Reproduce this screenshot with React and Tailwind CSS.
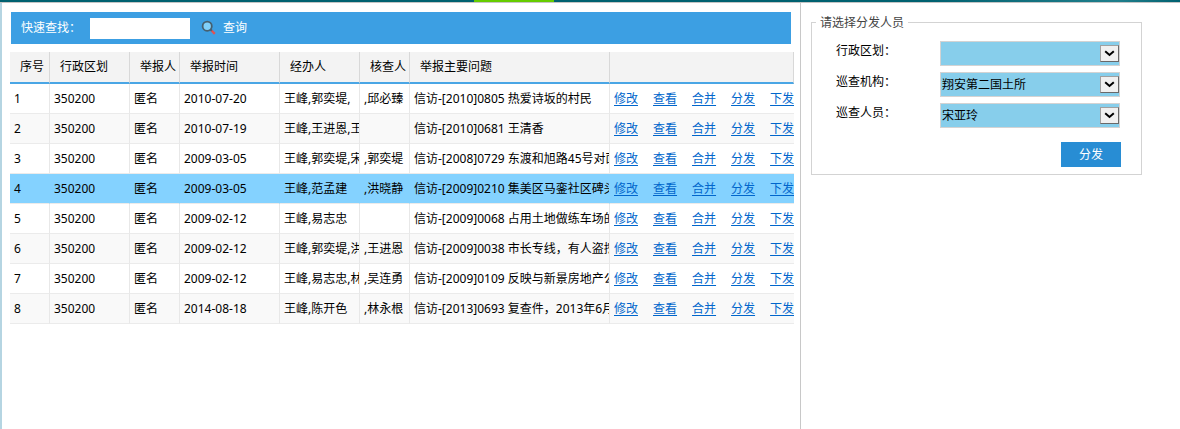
import { useState } from 'react';

const columns = [
  { title: '序号', width: 'w-10' },
  { title: '行政区划', width: 'w-20' },
  { title: '举报人', width: 'w-[50px]' },
  { title: '举报时间', width: 'w-[100px]' },
  { title: '经办人', width: 'w-20' },
  { title: '核查人', width: 'w-[50px]' },
  { title: '举报主要问题', width: 'w-[200px]' },
];

const reports = [
  { id: 1, region: '350200', reporter: '匿名', date: '2010-07-20', handlers: '王峰,郭奕堤,', checker: ',邱必臻', issue: '信访-[2010]0805 热爱诗坂的村民' },
  { id: 2, region: '350200', reporter: '匿名', date: '2010-07-19', handlers: '王峰,王进恩,王', checker: '', issue: '信访-[2010]0681 王清香' },
  { id: 3, region: '350200', reporter: '匿名', date: '2009-03-05', handlers: '王峰,郭奕堤,宋', checker: ',郭奕堤', issue: '信访-[2008]0729 东渡和旭路45号对面' },
  { id: 4, region: '350200', reporter: '匿名', date: '2009-03-05', handlers: '王峰,范孟建', checker: ',洪晓静', issue: '信访-[2009]0210 集美区马銮社区碑头' },
  { id: 5, region: '350200', reporter: '匿名', date: '2009-02-12', handlers: '王峰,易志忠', checker: '', issue: '信访-[2009]0068 占用土地做练车场的' },
  { id: 6, region: '350200', reporter: '匿名', date: '2009-02-12', handlers: '王峰,郭奕堤,洪', checker: ',王进恩', issue: '信访-[2009]0038 市长专线，有人盗挖' },
  { id: 7, region: '350200', reporter: '匿名', date: '2009-02-12', handlers: '王峰,易志忠,林', checker: ',吴连勇', issue: '信访-[2009]0109 反映与新景房地产公' },
  { id: 8, region: '350200', reporter: '匿名', date: '2014-08-18', handlers: '王峰,陈开色', checker: ',林永根', issue: '信访-[2013]0693 复查件，2013年6月' },
];

const actions = ['修改', '查看', '合并', '分发', '下发'];

const fields = [
  { id: 'region', label: '行政区划：', options: [''] },
  { id: 'agency', label: '巡查机构：', options: ['翔安第二国土所'] },
  { id: 'inspector', label: '巡查人员：', options: ['宋亚玲'] },
];

function SearchIcon() {
  return (
    <svg className="w-4 h-4" viewBox="0 0 16 16" fill="none" aria-hidden="true">
      <path d="M10.5 10.5l3.3 3.3" stroke="#e05252" strokeWidth="2.4" />
      <path d="M9 9l1.8 1.8" stroke="#4a6070" strokeWidth="2" />
      <circle cx="6.2" cy="6.2" r="4.6" fill="#7fd0fa" stroke="#46606f" strokeWidth="1.8" />
    </svg>
  );
}

function SelectField({ id, label, options }) {
  return (
    <div className="flex items-start">
      <label htmlFor={id} className="w-[104px] leading-5">{label}</label>
      <div className="relative w-[180px]">
        <select
          id={id}
          className="block w-full h-[25px] appearance-none border border-[#d3d3d3] bg-[#87ceeb] pl-px pr-5 text-black outline-none"
        >
          {options.map((o) => (
            <option key={o}>{o}</option>
          ))}
        </select>
        <span className="pointer-events-none absolute right-px top-1 flex h-[17px] w-[19px] items-center justify-center border border-[#a0a0a0] border-r-[#696969] border-b-[#696969] bg-[#f0f0f0]">
          <svg className="w-[11px] h-[7px]" viewBox="0 0 11 7" fill="none" aria-hidden="true">
            <path d="M1.2 1.2L5.5 5L9.8 1.2" stroke="#000" strokeWidth="2" />
          </svg>
        </span>
      </div>
    </div>
  );
}

export default function App() {
  const [selected, setSelected] = useState(4);

  return (
    <div className="flex min-h-screen flex-col bg-white font-['Noto_Sans','Noto_Sans_CJK_SC',sans-serif] text-xs text-black">
      <div className="flex h-[3px] border-b border-[#c4c4c4]">
        <div className="w-[474px] bg-[#006170]" />
        <div className="w-20 bg-[#66cc00]" />
        <div className="flex-1 bg-linear-to-r from-[#006170] from-60% via-[#1f7f8c] via-90% to-[#006170]" />
      </div>

      <div className="flex flex-1">
        <main className="min-w-0 flex-1 border-l-2 border-l-[#b5d5e2] border-r border-r-[#c8c8c8] pt-[9px] pr-[6px] pl-2">
          <form className="ml-px mr-[3px] flex h-8 items-center bg-[#3c9fe3] pl-[10px] text-white" onSubmit={(e) => e.preventDefault()}>
            <label htmlFor="keyword" className="w-[69px]">快速查找：</label>
            <input id="keyword" type="text" className="h-[21px] w-[100px] bg-white px-1 text-black outline-none" />
            <button type="submit" className="ml-[11px] flex items-center gap-[6px]">
              <SearchIcon />
              查询
            </button>
          </form>

          <table className="mt-2 w-full table-fixed border-separate border-spacing-0 whitespace-nowrap text-left">
            <thead>
              <tr className="h-8 bg-[#f3f3f3]">
                {columns.map((col) => (
                  <th key={col.title} scope="col" className={`${col.width} border-r border-b-2 border-r-[#d8d8d8] border-b-[#4aa6e5] p-0 pl-[10px] font-normal`}>
                    {col.title}
                  </th>
                ))}
                <th className="border-r border-b-2 border-r-[#d8d8d8] border-b-[#4aa6e5] p-0" />
              </tr>
            </thead>
            <tbody>
              {reports.map((r) => {
                const active = r.id === selected;
                const cell = `overflow-hidden p-0 pl-1 border-r border-b border-b-[#ebebeb] ${active ? 'border-r-[#84d2ff]' : 'border-r-[#e8e8e8]'}`;
                return (
                  <tr
                    key={r.id}
                    onClick={() => setSelected(r.id)}
                    className={`h-[30px] ${active ? 'bg-[#84d2ff]' : 'bg-white even:bg-[#f9f9f9]'}`}
                  >
                    <td className={cell}>{r.id}</td>
                    <td className={cell}>{r.region}</td>
                    <td className={cell}>{r.reporter}</td>
                    <td className={cell}>{r.date}</td>
                    <td className={cell}>{r.handlers}</td>
                    <td className={cell}>{r.checker}</td>
                    <td className={cell}>{r.issue}</td>
                    <td className="overflow-hidden border-b border-b-[#ebebeb] p-0 pl-1">
                      <div className="flex gap-[15px]">
                        {actions.map((a) => (
                          <a key={a} href="#" className="shrink-0 text-[#0066cc] underline underline-offset-2">{a}</a>
                        ))}
                      </div>
                    </td>
                  </tr>
                );
              })}
            </tbody>
          </table>
        </main>

        <aside className="w-[379px] shrink-0 pt-3 pr-[38px] pl-[10px]">
          <fieldset className="border border-[#d3d3d3] px-5 pb-[7px]">
            <legend className="-ml-4 px-1 leading-[15px] text-[#444]">请选择分发人员</legend>
            <div className="flex flex-col gap-[6px] pt-[11px] pl-1">
              {fields.map((f) => (
                <SelectField key={f.id} {...f} />
              ))}
            </div>
            <div className="mt-[14px] flex justify-end">
              <button type="button" className="h-[25px] w-[60px] bg-[#288dd4] text-white">分发</button>
            </div>
          </fieldset>
        </aside>
      </div>
    </div>
  );
}
